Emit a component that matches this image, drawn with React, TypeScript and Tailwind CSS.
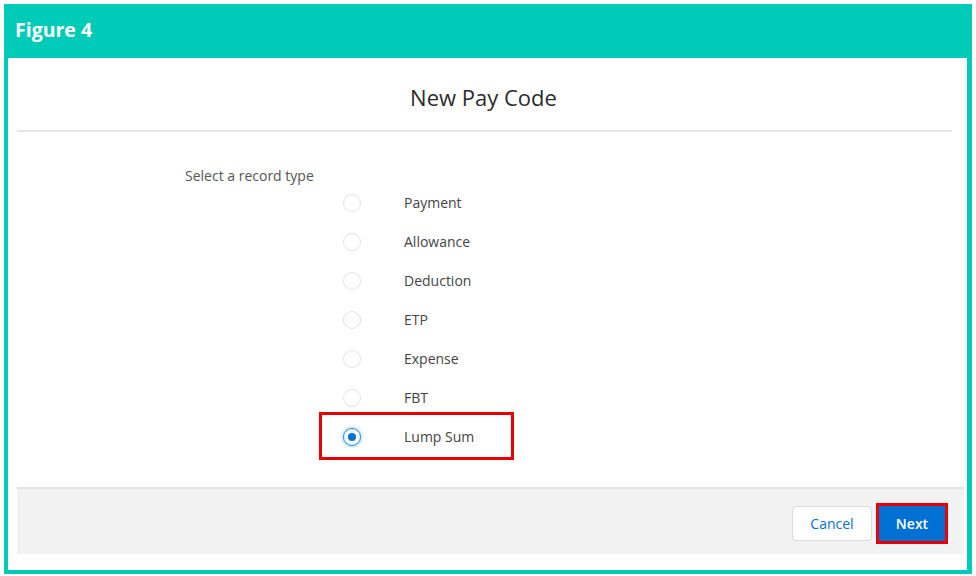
import React from "react";

const recordTypes = ["Payment", "Allowance", "Deduction", "ETP", "Expense", "FBT", "Lump Sum"];

function Radio({ checked }: { checked: boolean }) {
  if (checked) {
    return (
      <span className="flex h-[18px] w-[18px] items-center justify-center rounded-full border border-[#1b96ff] bg-white shadow-[0_0_3px_1px_#a8d4ff]">
        <span className="h-[8px] w-[8px] rounded-full bg-[#0070d2]" />
      </span>
    );
  }
  return <span className="block h-[18px] w-[18px] rounded-full border border-[#e3e3e3] bg-white" />;
}

export default function App() {
  const selected = "Lump Sum";

  return (
    <div className="h-[576px] w-[976px] bg-white pt-1 pl-1 pr-1 font-['Open_Sans',sans-serif]">
      <div className="flex h-[570px] w-[968px] flex-col">
        {/* teal header */}
        <div className="flex h-[54px] items-center bg-[#00cbb9] pl-[11px] pb-[2px]">
          <span className="text-[19.5px] font-bold text-white">Figure 4</span>
        </div>

        {/* modal body inside teal frame */}
        <div className="flex flex-1 flex-col border-r-[5px] border-b-4 border-l-4 border-[#00cbb9] bg-white">
          <div className="flex h-[72px] items-center justify-center pt-[6px] pr-2">
            <h1 className="text-[22px] leading-[30px] text-[#2b2b2b]">New Pay Code</h1>
          </div>
          <div className="ml-[9px] mr-[15px] h-[2px] bg-[#e5e5e5]" />

          <div className="mt-9 pl-[177px]">
            <div className="h-[15px] text-[14px] leading-[15px] text-[#555]">Select a record type</div>
          </div>

          <div className="flex flex-col pl-[335px]">
            {recordTypes.map((t) => (
              <div key={t} className="relative flex h-[39px] items-center">
                <Radio checked={t === selected} />
                <span className="ml-[43px] text-[14px] text-[#444]">{t}</span>
                {t === selected && (
                  <span className="pointer-events-none absolute top-[-5px] left-[-24px] h-[48px] w-[195px] border-[3px] border-[#ea0000]" />
                )}
              </div>
            ))}
          </div>

          <div className="mt-auto mb-4 ml-[9px] mr-[3px] flex h-[67px] items-center justify-end gap-1 border-t-2 border-[#e2e2e2] bg-[#f2f2f2] pr-4 pt-[3px]">
            <button className="h-[35px] w-[80px] rounded-[4px] border border-[#dddbda] bg-white text-[14px] text-[#0070d2]">
              Cancel
            </button>
            <div className="border-[3px] border-[#ea0000]">
              <button className="h-[35px] w-[66px] bg-[#0070d2] text-[14px] font-semibold text-white">Next</button>
            </div>
          </div>
        </div>
      </div>
    </div>
  );
}
